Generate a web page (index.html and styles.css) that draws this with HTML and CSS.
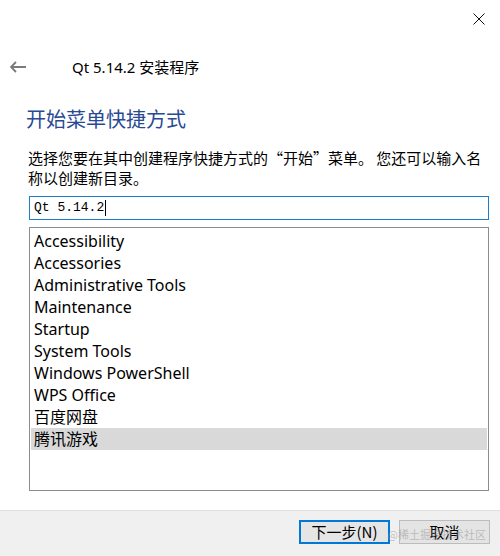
FILE: index.html
```html
<!DOCTYPE html>
<html lang="zh-CN">
<head>
  <meta charset="UTF-8" />
  <title>Qt 5.14.2 安装程序</title>
  <link rel="stylesheet" href="styles.css">
</head>
<body>
  <div class="window">
    <div class="caption">
      <button class="close" title="关闭">
        <svg width="12" height="12" viewBox="0 0 12 12">
          <path d="M0.5 0.5 L11.5 11.5 M11.5 0.5 L0.5 11.5" stroke="#111" stroke-width="1" fill="none" />
        </svg>
      </button>
    </div>

    <div class="nav">
      <svg class="back" width="16" height="12" viewBox="0 0 16 12">
        <path d="M1 6 H16 M6 1 L1 6 L6 11" stroke="#7a7a7a" stroke-width="1.8" fill="none" />
      </svg>
      <span class="app-title">Qt 5.14.2 安装程序</span>
    </div>

    <div class="page">
      <h1>开始菜单快捷方式</h1>
      <p class="desc">选择您要在其中创建程序快捷方式的“开始”菜单。 您还可以输入名<br>称以创建新目录。</p>

      <div class="folder-input">Qt 5.14.2<span class="caret"></span></div>

      <ul class="folder-list">
        <li>Accessibility</li>
        <li>Accessories</li>
        <li>Administrative Tools</li>
        <li>Maintenance</li>
        <li>Startup</li>
        <li>System Tools</li>
        <li>Windows PowerShell</li>
        <li>WPS Office</li>
        <li>百度网盘</li>
        <li class="selected">腾讯游戏</li>
      </ul>
    </div>

    <div class="footer">
      <button class="btn primary">下一步(<u>N</u>)</button>
      <button class="btn">取消</button>
      <span class="watermark">@稀土掘金技术社区</span>
    </div>
  </div>
</body>
</html>
```

FILE: styles.css
```css
:root {
  --accent: #0078d7;
  --heading: #294a93;
  --text: #000000;
  --footer-bg: #f0f0f0;
  --ui-font: "Noto Sans", "Noto Sans CJK SC", sans-serif;
  --cjk-font: "Noto Sans CJK SC", sans-serif;
}

body {
  margin: 0;
  background: #ffffff;
  color: var(--text);
  font-family: var(--ui-font);
}

.window {
  height: 556px;
  display: flex;
  flex-direction: column;
}

.caption {
  display: flex;
  justify-content: flex-end;
  padding: 13px 15px 0 0;
  height: 12px;
}

.close {
  border: none;
  background: none;
  padding: 0;
  width: 12px;
  height: 12px;
  display: block;
}

.close svg {
  display: block;
}

.nav {
  display: flex;
  align-items: center;
  gap: 46px;
  margin-top: 32px;
  padding-left: 10px;
  height: 20px;
}

.back {
  display: block;
}

.app-title {
  font-size: 15px;
  line-height: 20px;
}

.page {
  padding-left: 26px;
}

h1 {
  margin: 28px 0 0;
  font-family: var(--cjk-font);
  font-weight: normal;
  font-size: 20px;
  line-height: 28px;
  color: var(--heading);
}

.desc {
  margin: 15px 0 0 2px;
  font-family: var(--cjk-font);
  font-size: 15px;
  line-height: 20px;
}

.folder-input {
  margin: 8px 0 0 3px;
  width: 454px;
  height: 22px;
  padding-left: 4px;
  border: 1px solid #1b7fcc;
  font-family: "Liberation Mono", monospace;
  font-size: 13px;
  line-height: 22px;
  display: flex;
  align-items: center;
}

.caret {
  display: inline-block;
  width: 1px;
  height: 16px;
  background: #000;
  margin-left: 1px;
}

.folder-list {
  list-style: none;
  margin: 7px 0 0 3px;
  padding: 2px 1px 0;
  width: 456px;
  height: 260px;
  border: 1px solid #8c8c8c;
}

.folder-list li {
  height: 22px;
  line-height: 22px;
  padding-left: 3px;
  font-size: 16px;
}

.folder-list li.selected {
  background: #d9d9d9;
}

.footer {
  margin-top: auto;
  position: relative;
  height: 36px;
  padding: 9px 10px 0 0;
  border-top: 1px solid #dfdfdf;
  background: var(--footer-bg);
  display: flex;
  justify-content: flex-end;
  align-items: flex-start;
  gap: 9px;
}

.btn {
  width: 91px;
  height: 24px;
  padding: 0;
  border: 1px solid #bcbcbc;
  background: #e4e4e4;
  font-family: var(--cjk-font);
  font-size: 15px;
  line-height: 20px;
  color: #000;
}

.btn u {
  text-decoration: none;
}

.btn.primary {
  border: 2px solid var(--accent);
  background: #e5e5e5;
}

.watermark {
  position: absolute;
  right: 14px;
  top: 16px;
  font-family: var(--cjk-font);
  font-size: 11px;
  line-height: 14px;
  color: rgba(150, 150, 150, 0.55);
  pointer-events: none;
}
```
